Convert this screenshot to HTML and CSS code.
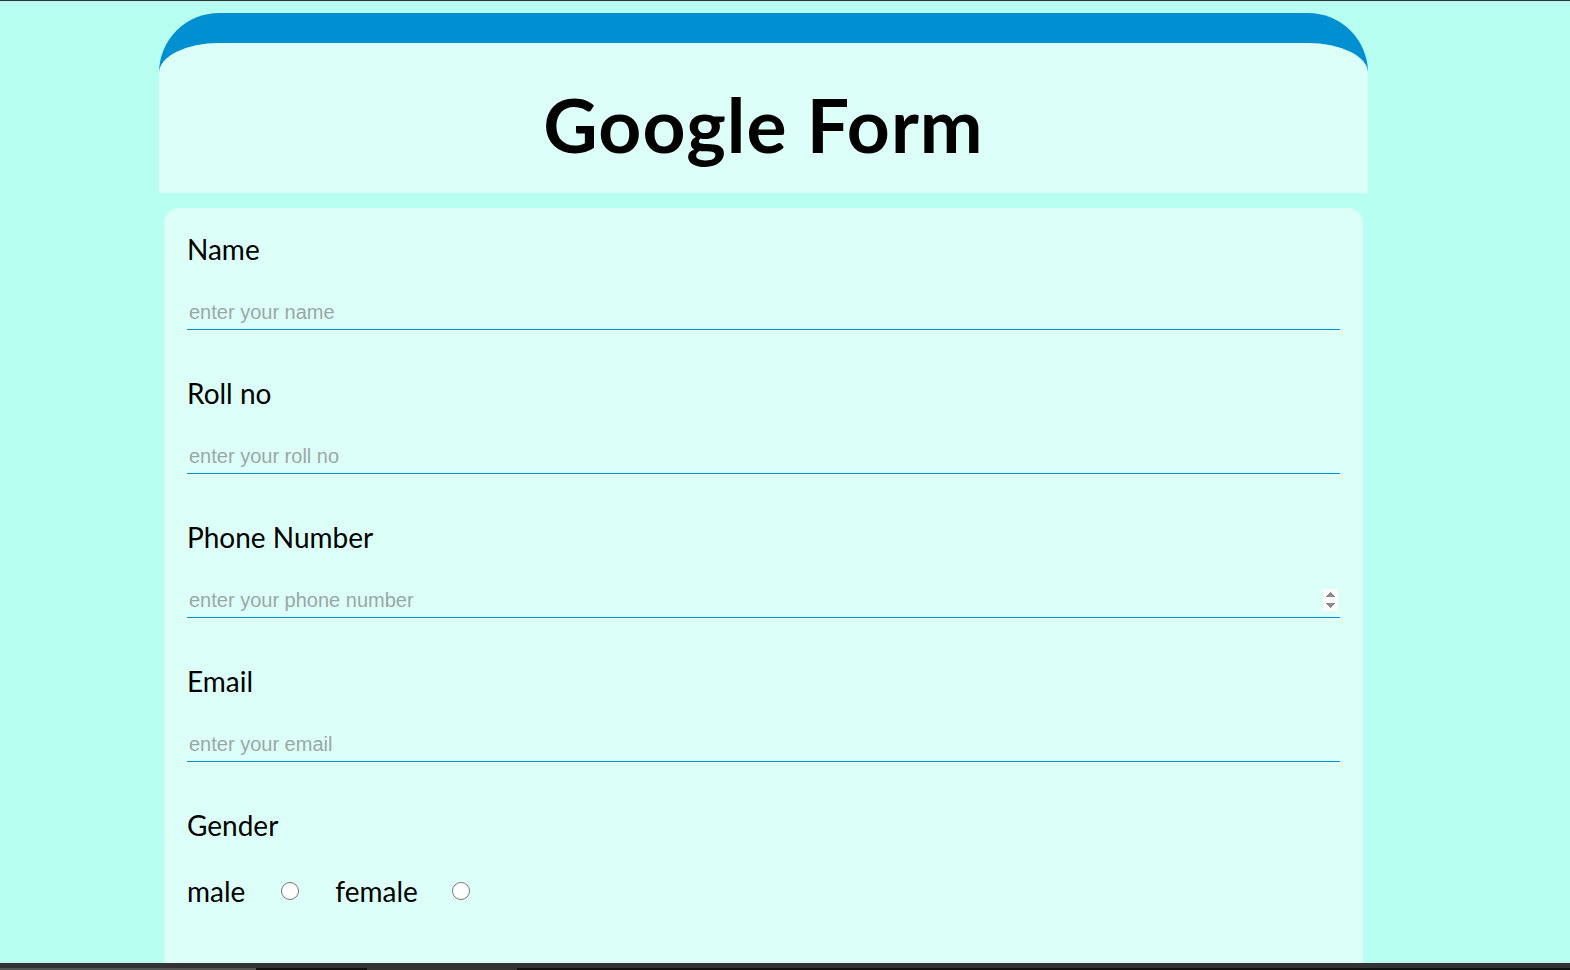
FILE: index.html
```html
<!DOCTYPE html>
<html lang="en">
<head>
<meta charset="utf-8">
<title>Google Form</title>
<link rel="stylesheet" href="styles.css">
</head>
<body>
<div class="topline"></div>
<div class="page">
  <header class="head">
    <h1 class="title">Google Form</h1>
  </header>
  <form class="card">
    <div class="field">
      <label class="label" for="name">Name</label>
      <input class="input" id="name" type="text" placeholder="enter your name">
    </div>
    <div class="field">
      <label class="label" for="roll">Roll no</label>
      <input class="input" id="roll" type="text" placeholder="enter your roll no">
    </div>
    <div class="field">
      <label class="label" for="phone">Phone Number</label>
      <input class="input" id="phone" type="number" placeholder="enter your phone number">
    </div>
    <div class="field">
      <label class="label" for="email">Email</label>
      <input class="input" id="email" type="email" placeholder="enter your email">
    </div>
    <div class="field">
      <span class="label">Gender</span>
      <div class="radios">
        <label class="opt" for="male">male</label>
        <input class="radio" id="male" type="radio" name="gender">
        <label class="opt" for="female">female</label>
        <input class="radio" id="female" type="radio" name="gender">
      </div>
    </div>
  </form>
</div>
<div class="taskbar">
  <div class="tb-top"></div>
  <div class="tb-bottom">
    <span class="seg s1"></span><span class="seg s2"></span><span class="seg s3"></span><span class="seg s4"></span>
  </div>
</div>
</body>
</html>
```
FILE: styles.css
```css
html, body {
  margin: 0;
  padding: 0;
}
html {
  overflow: hidden;
}
body {
  background: #b7fff0;
  font-family: "Lato", "Liberation Sans", sans-serif;
  color: #000;
}
.topline {
  position: fixed;
  top: 0;
  left: 0;
  right: 0;
  height: 1px;
  background: #333;
  z-index: 5;
}
.page {
  width: 1209px;
  margin: 0 0 0 159px;
  padding-top: 13px;
}
.head {
  background: #dcfff8;
  border-top: 30px solid #0090d2;
  border-radius: 60px 60px 0 0;
  height: 150px;
  box-sizing: content-box;
  text-align: center;
}
.title {
  margin: 0;
  padding-top: 36px;
  font-family: "Lato", sans-serif;
  font-weight: 700;
  font-size: 75px;
  line-height: 90px;
  letter-spacing: 1px;
}
.card {
  margin: 15px 5px 0;
  background: #dcfff8;
  border-radius: 15px 15px 0 0;
  padding: 24px 23px 60px;
}
.field {
  margin-bottom: 46px;
}
.label {
  display: block;
  font-size: 28px;
  line-height: 34px;
  margin-bottom: 32px;
}
.input {
  display: block;
  width: 100%;
  box-sizing: border-box;
  border: none;
  border-bottom: 1px solid #0090d2;
  background: transparent;
  font-family: "Liberation Sans", Arial, sans-serif;
  font-size: 20px;
  line-height: 23px;
  height: 32px;
  padding: 3px 2px 5px;
  outline: none;
}
.input::placeholder {
  color: #9aa8a5;
}
.input[type=number]::-webkit-inner-spin-button {
  opacity: 1;
}
.radios {
  display: flex;
  align-items: center;
}
.opt {
  font-size: 28px;
  line-height: 34px;
}
.radio {
  width: 18px;
  height: 18px;
  margin: 0 36px;
}
.radio:last-child {
  margin-left: 34px;
}
.taskbar {
  position: fixed;
  left: 0;
  right: 0;
  bottom: 0;
  height: 7px;
  z-index: 5;
}
.tb-top {
  height: 5px;
  background: #333;
}
.tb-bottom {
  display: flex;
  height: 2px;
}
.seg { display: block; height: 2px; }
.s1 { width: 256px; background: #555; }
.s2 { width: 111px; background: #111; }
.s3 { width: 150px; background: #333; }
.s4 { flex: 1; background: #111; }
```
